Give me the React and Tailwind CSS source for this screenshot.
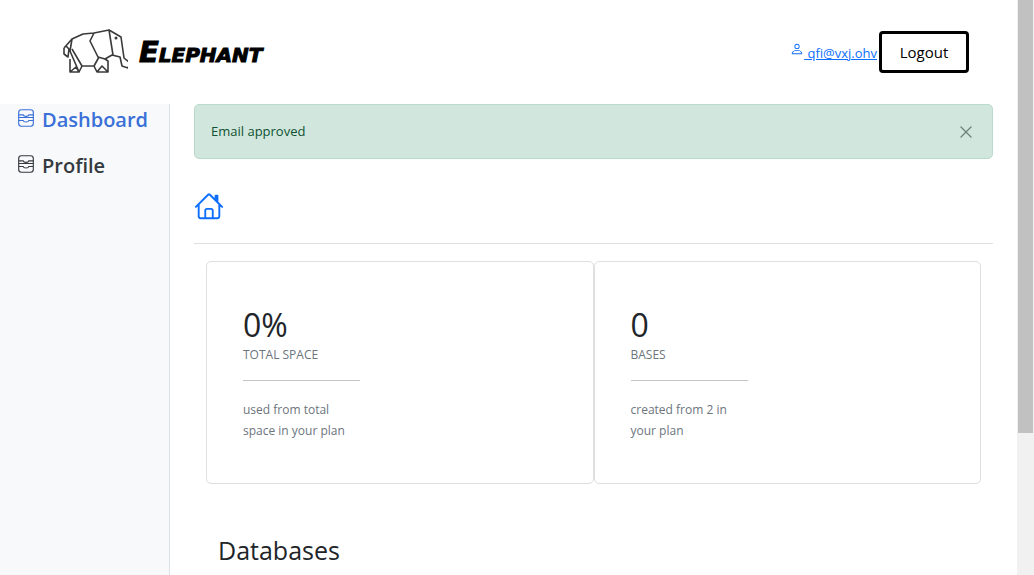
import React from 'react';
import { X } from 'lucide-react';

const font = '"Open Sans", "Noto Sans", sans-serif';

const ElephantLogo = () => (
  <svg width="66" height="50" viewBox="0 0 66 50" fill="none" stroke="#3a3a3a" strokeWidth="1.6" strokeLinejoin="round">
    <path d="M2 21 L10 12 L21 7 L32 6 M32 6 L47 3 L59 10 L62 31 L68 36 L66 41 L60 39 L58 30 L50 28 L43 32 L36 30 L32 22 L28 14 Z" />
    <path d="M47 3 L51 28 M2 21 L2 27 L6 30 L7 22 L4 19 M10 12 L8 24 L17 45 L8 45 L8 32 M10 22 L20 39 L32 39 L37 30 M32 39 L35 45 L46 45 L46 34 L43 32 M17 45 L20 39 M35 45 L40 39 L46 45 M8 45 L14 40 L17 45" />
    <circle cx="54" cy="11" r="0.7" fill="#3a3a3a" />
  </svg>
);

const TrayIcon = ({ className }) => (
  <svg className={className} width="18" height="18" viewBox="0 0 16 16" fill="currentColor">
    <path d="M4.98 1a.5.5 0 0 0-.39.188L1.54 5H6a.5.5 0 0 1 .5.5 1.5 1.5 0 0 0 3 0A.5.5 0 0 1 10 5h4.46l-3.05-3.812A.5.5 0 0 0 11.02 1H4.98zM3.81.563A1.5 1.5 0 0 1 4.98 0h6.04a1.5 1.5 0 0 1 1.17.563l3.7 4.625a.5.5 0 0 1 .106.374l-.39 3.124A1.5 1.5 0 0 1 14.117 10H1.883A1.5 1.5 0 0 1 .394 8.686l-.39-3.124a.5.5 0 0 1 .106-.374L3.81.563zM.125 11.17A.5.5 0 0 1 .5 11H6a.5.5 0 0 1 .5.5 1.5 1.5 0 0 0 3 0 .5.5 0 0 1 .5-.5h5.5a.5.5 0 0 1 .496.562l-.39 3.124A1.5 1.5 0 0 1 14.117 16H1.883a1.5 1.5 0 0 1-1.489-1.314l-.39-3.124a.5.5 0 0 1 .121-.393z" fillOpacity="0" />
    <rect x="1.5" y="0.7" width="13" height="14.6" rx="2.4" fill="none" stroke="currentColor" strokeWidth="1" />
    <path d="M1.5 7.6 H14.5 M1.5 5.2 H5.5 C5.8 7 10.2 7 10.5 5.2 H14.5 M1.5 10.2 H5.5 C5.8 12 10.2 12 10.5 10.2 H14.5" fill="none" stroke="currentColor" strokeWidth="1" />
  </svg>
);

const HomeIcon = () => (
  <svg width="30" height="30" viewBox="0 0 16 16" fill="#0d6efd">
    <path d="M8.707 1.5a1 1 0 0 0-1.414 0L.646 8.146a.5.5 0 0 0 .708.708L2 8.207V13.5A1.5 1.5 0 0 0 3.5 15h9a1.5 1.5 0 0 0 1.5-1.5V8.207l.646.647a.5.5 0 0 0 .708-.708L13 5.793V2.5a.5.5 0 0 0-.5-.5h-1a.5.5 0 0 0-.5.5v1.293L8.707 1.5ZM13 7.207V13.5a.5.5 0 0 1-.5.5h-9a.5.5 0 0 1-.5-.5V7.207l5-5 5 5Z" />
    <path d="M6.5 14.5v-4a.5.5 0 0 1 .5-.5h2a.5.5 0 0 1 .5.5v4h1v-4A1.5 1.5 0 0 0 9 9H7a1.5 1.5 0 0 0-1.5 1.5v4h1Z" />
  </svg>
);

const UserIcon = () => (
  <svg width="14" height="14" viewBox="0 0 16 16" fill="currentColor" className="inline-block align-[2px]">
    <path d="M8 8a3 3 0 1 0 0-6 3 3 0 0 0 0 6Zm2-3a2 2 0 1 1-4 0 2 2 0 0 1 4 0Zm4 8c0 1-1 1-1 1H3s-1 0-1-1 1-4 6-4 6 3 6 4Zm-1-.004c-.001-.246-.154-.986-.832-1.664C11.516 10.68 10.289 10 8 10c-2.29 0-3.516.68-4.168 1.332-.678.678-.83 1.418-.832 1.664h10Z" />
  </svg>
);

const StatCard = ({ value, label, line1, line2 }) => (
  <div className="flex-1 h-[223px] border border-[#dfdfdf] rounded-[5px] pt-[44px] pl-[36px]">
    <div className="text-[32px] leading-[38px] text-[#212529]">{value}</div>
    <div className="mt-[2px] text-[12px] leading-[18px] text-[#6c757d]">{label}</div>
    <div className="mt-[16px] w-[117px] h-px bg-[#c4c4c4]" />
    <p className="mt-[18px] text-[12px] leading-[21px] text-[#6c757d]">
      {line1}
      <br />
      {line2}
    </p>
  </div>
);

export default function App() {
  return (
    <div className="flex h-[575px] w-full overflow-hidden bg-white" style={{ fontFamily: font }}>
      <div className="flex-1 min-w-0 flex flex-col">
        {/* Header */}
        <header className="h-[104px] shrink-0 flex items-start justify-between pl-[62px] pr-[48px]">
          <div className="flex items-center mt-[27px] gap-[11px]">
            <ElephantLogo />
            <span
              className="text-[29px] leading-[50px] font-bold italic text-black"
              style={{ fontFamily: '"DejaVu Sans", sans-serif', fontVariant: 'small-caps', WebkitTextStroke: '1px black' }}
            >
              Elephant
            </span>
          </div>
          <div className="flex items-start mt-[31px]">
            <a className="mt-[11px] text-[13px] leading-[18px] text-[#0d6efd] underline">
              <UserIcon /> qfi@vxj.ohv
            </a>
            <button className="ml-[2px] w-[90px] h-[42px] border-[3px] border-black rounded-[4px] bg-white text-[15px] font-medium text-black">
              Logout
            </button>
          </div>
        </header>

        <div className="flex flex-1 min-h-0">
          {/* Sidebar */}
          <aside className="w-[170px] shrink-0 bg-[#f8f9fa] border-r border-[#dee2e6] pl-[17px]">
            <div className="flex items-center gap-[7px] h-[32px] text-[#3a70d8] text-[20px] font-semibold">
              <TrayIcon className="-mt-[4px]" />
              Dashboard
            </div>
            <div className="flex items-center gap-[7px] h-[32px] mt-[14px] text-[#343a40] text-[20px] font-semibold">
              <TrayIcon className="-mt-[4px]" />
              Profile
            </div>
          </aside>

          {/* Main */}
          <main className="flex-1 min-w-0 pl-[24px]">
            <div className="w-[799px] h-[55px] flex items-center justify-between pl-[16px] pr-[16px] bg-[#d1e7dd] border border-[#badbcc] rounded-[5px] text-[13px] text-[#0f5132]">
              Email approved
              <X size={20} strokeWidth={1.5} className="text-[#6a8279]" />
            </div>
            <div className="w-[799px] h-[85px] border-b border-[#dfdfdf] pt-[32px]">
              <HomeIcon />
            </div>
            <div className="w-[775px] ml-[12px] mt-[17px] flex">
              <StatCard value="0%" label="TOTAL SPACE" line1="used from total" line2="space in your plan" />
              <StatCard value="0" label="BASES" line1="created from 2 in" line2="your plan" />
            </div>
            <h2 className="mt-[46px] ml-[24px] text-[25px] leading-[40px] font-medium text-[#212529]">Databases</h2>
          </main>
        </div>
      </div>

      {/* Scrollbar */}
      <div className="w-[17px] shrink-0 bg-[#f1f1f1] px-px">
        <div className="h-[433px] bg-[#c1c1c1]" />
      </div>
    </div>
  );
}
